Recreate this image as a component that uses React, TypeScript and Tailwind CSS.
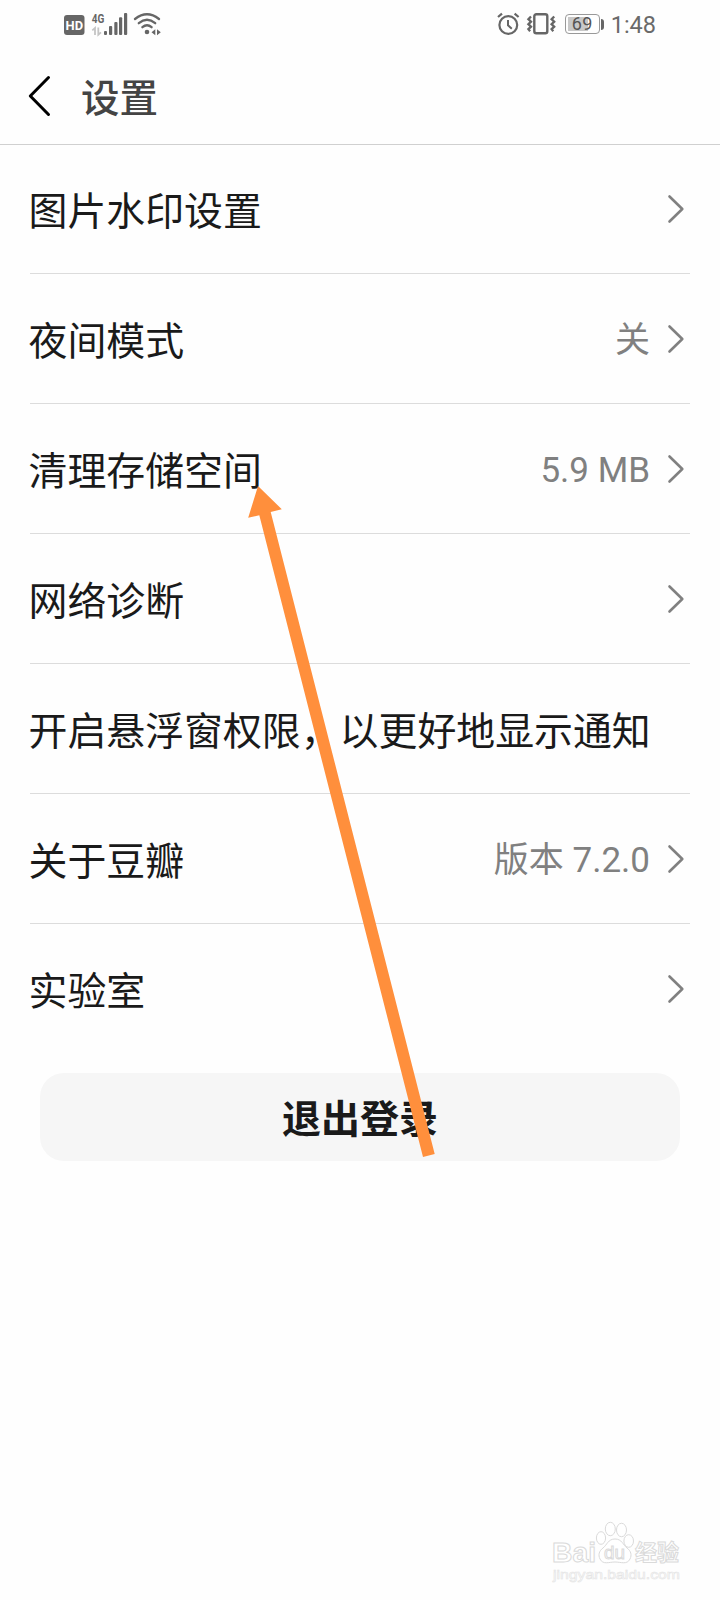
import { ReactNode } from 'react'

type Setting = {
  label: string
  value?: string
  arrow?: boolean
}

const settings: Setting[] = [
  { label: '图片水印设置', arrow: true },
  { label: '夜间模式', value: '关', arrow: true },
  { label: '清理存储空间', value: '5.9 MB', arrow: true },
  { label: '网络诊断', arrow: true },
  { label: '开启悬浮窗权限，以更好地显示通知' },
  { label: '关于豆瓣', value: '版本 7.2.0', arrow: true },
  { label: '实验室', arrow: true },
]

function NetworkIcons() {
  return (
    <svg width="98" height="26" viewBox="0 0 98 26" fill="#666">
      {/* HD badge */}
      <rect x="0" y="4" width="20.5" height="20" rx="3" />
      <text
        x="10.3"
        y="19"
        fontSize="13.5"
        fontWeight="700"
        fill="#fff"
        textAnchor="middle"
        textLength="17.5"
        lengthAdjust="spacingAndGlyphs"
        fontFamily="Roboto, sans-serif"
      >
        HD
      </text>
      {/* Mobile data */}
      <text
        x="27.8"
        y="11.6"
        fontSize="13"
        fontWeight="700"
        textLength="12.6"
        lengthAdjust="spacingAndGlyphs"
        fontFamily="Roboto, sans-serif"
      >
        4G
      </text>
      <path d="M28.3 19.3l2.7-2.4v7.2M34.3 16.5v7.2l2.7-2.4" fill="none" stroke="#c4c4c4" strokeWidth="1.8" />
      <rect x="40" y="20" width="3" height="4" rx="1" />
      <rect x="45" y="15" width="3.2" height="9" rx="1" />
      <rect x="50.3" y="11" width="3.2" height="13" rx="1" />
      <rect x="55" y="6.3" width="3.2" height="17.7" rx="1" />
      <rect x="60" y="2" width="3.2" height="22" rx="1" />
      {/* Wifi */}
      <g fill="none" stroke="#666" strokeWidth="2.3" strokeLinecap="round">
        <path d="M71 8Q83 -1.4 95 8" />
        <path d="M74.8 12.2Q83 5.4 91.2 12.2" />
        <path d="M78.4 16.2Q83 12.2 87.6 16.2" />
      </g>
      <circle cx="83" cy="21" r="2.3" />
      <path d="M91.3 18.2v6l-3.8-3zM93 18.2v6l3.8-3z" />
    </svg>
  )
}

function DeviceIcons() {
  return (
    <svg width="60" height="24" viewBox="0 0 60 24" fill="none" stroke="#666">
      {/* Alarm */}
      <circle cx="11.3" cy="13" r="8.9" strokeWidth="2.2" />
      <path d="M11 8v5.3l3.8 3.4" strokeWidth="2" />
      <path d="M1 5l4-3.4M17.6 1.6l4 3.4" strokeWidth="2.2" />
      {/* Vibrate */}
      <rect x="37.3" y="2.3" width="13" height="19" rx="2" strokeWidth="2.4" />
      <path d="M34 4.5l-2.6 2.7L34 9.7l-2.6 2.5 2.6 2.5-2.6 2.5 1.7 2" strokeWidth="2.3" />
      <path d="M57.2 4.5l-2.6 2.7 2.6 2.5-2.6 2.5 2.6 2.5-2.6 2.5 1.7 2" strokeWidth="2.3" />
    </svg>
  )
}

function StatusBar() {
  return (
    <div className="flex h-12 items-center justify-between pl-[63.5px] pr-[64px]">
      <NetworkIcons />
      <div className="flex items-center">
        <DeviceIcons />
        <div className="ml-[8px] h-[20px] w-[35px] rounded-[4px] border-[1.5px] border-[#999] p-[2px]">
          <div className="flex h-full w-full items-center justify-center bg-linear-to-r from-[#c8c8c8] from-69% to-white to-69% text-[18px] leading-none tracking-[0.2px] text-[#555]">
            69
          </div>
        </div>
        <div className="ml-px h-[11px] w-[3px] rounded-r-sm bg-[#666]" />
        <span className="ml-[7px] pt-[3px] text-[23.5px] leading-none text-[#6a6a6a]">1:48</span>
      </div>
    </div>
  )
}

function Header() {
  return (
    <header className="flex h-[97px] items-center border-b border-[#d0d0d0] pl-[28px]">
      <svg width="24" height="42" viewBox="0 0 24 42" fill="none">
        <path
          d="M20.5 2.5L2.3 21l18.2 18.5"
          stroke="#000"
          strokeWidth="3"
          strokeLinecap="round"
          strokeLinejoin="round"
        />
      </svg>
      <h1 className="ml-[29px] pt-[7px] text-[38.5px] font-medium leading-none text-[#444]">设置</h1>
    </header>
  )
}

function Chevron() {
  return (
    <svg width="18" height="30" viewBox="0 0 18 30" fill="none">
      <path
        d="M2.5 2.5L15.3 15 2.5 27.5"
        stroke="#808080"
        strokeWidth="2.6"
        strokeLinecap="round"
        strokeLinejoin="round"
      />
    </svg>
  )
}

function Row({ children, last }: { children: ReactNode; last: boolean }) {
  return (
    <li
      className={`mx-[30px] flex h-[130px] items-center justify-between pr-[5px] first:h-[129px] ${
        last ? '' : 'border-b border-[#dcdcdc]'
      }`}
    >
      {children}
    </li>
  )
}

function Watermark() {
  return (
    <svg
      className="absolute bottom-0 right-0"
      width="190"
      height="90"
      viewBox="0 0 190 90"
      fill="#fff"
      stroke="#dadada"
      strokeWidth="1"
      fontFamily="'Liberation Sans', 'Noto Sans CJK SC', sans-serif"
    >
      <text x="22" y="52" fontSize="27" fontWeight="700" textLength="44" lengthAdjust="spacingAndGlyphs">
        Bai
      </text>
      <ellipse cx="71" cy="28" rx="4.6" ry="6.3" />
      <ellipse cx="80.3" cy="19" rx="5" ry="6.7" />
      <ellipse cx="91.5" cy="20" rx="5" ry="6.7" />
      <ellipse cx="98.7" cy="31" rx="4.8" ry="6.3" />
      <path d="M85 29c7 0 8 6 12 9s5 7 3 11c-3 6-9 3-15 3s-12 3-15-3c-2-4-1-8 3-11s5-9 12-9z" />
      <text x="74" y="49" fontSize="19" fontWeight="400" textLength="21" lengthAdjust="spacingAndGlyphs">
        du
      </text>
      <text x="105" y="50" fontSize="22" fontWeight="700" textLength="44" lengthAdjust="spacingAndGlyphs">
        经验
      </text>
      <text
        x="23"
        y="69"
        fontSize="13.5"
        strokeWidth="0.6"
        stroke="#e4e4e4"
        textLength="127"
        lengthAdjust="spacingAndGlyphs"
      >
        jingyan.baidu.com
      </text>
    </svg>
  )
}

export default function App() {
  return (
    <div className="relative h-[1600px] w-[720px] overflow-hidden bg-[#fefefe] font-[Roboto,'Noto_Sans_CJK_SC',sans-serif]">
      <StatusBar />
      <Header />

      <ul>
        {settings.map((item, i) => (
          <Row key={item.label} last={i === settings.length - 1}>
            <span className="-ml-[1.5px] whitespace-nowrap pt-[7px] text-[38.9px] leading-none text-[#1a1a1a]">
              {item.label}
            </span>
            {item.arrow && (
              <div className="flex items-center gap-[17px]">
                {item.value && (
                  <span className="pt-[4px] text-[35px] leading-none text-[#808080]">
                    {item.value}
                  </span>
                )}
                <Chevron />
              </div>
            )}
          </Row>
        ))}
      </ul>

      <button className="mx-10 mt-[19px] flex h-[88px] w-[640px] items-center justify-center rounded-[24px] bg-[#f6f6f6] pt-[6px] text-[39px] font-bold leading-none text-[#1a1a1a]">
        退出登录
      </button>

      <Watermark />

      {/* Pointer to the storage row */}
      <svg
        className="pointer-events-none absolute left-0 top-0"
        width="720"
        height="1600"
        viewBox="0 0 720 1600"
      >
        <path
          d="M258 486L281.8 509.3L270.7 512L434.7 1154L423 1157L259.3 515.3L248.2 517.8Z"
          fill="#ff8f3c"
        />
      </svg>
    </div>
  )
}
